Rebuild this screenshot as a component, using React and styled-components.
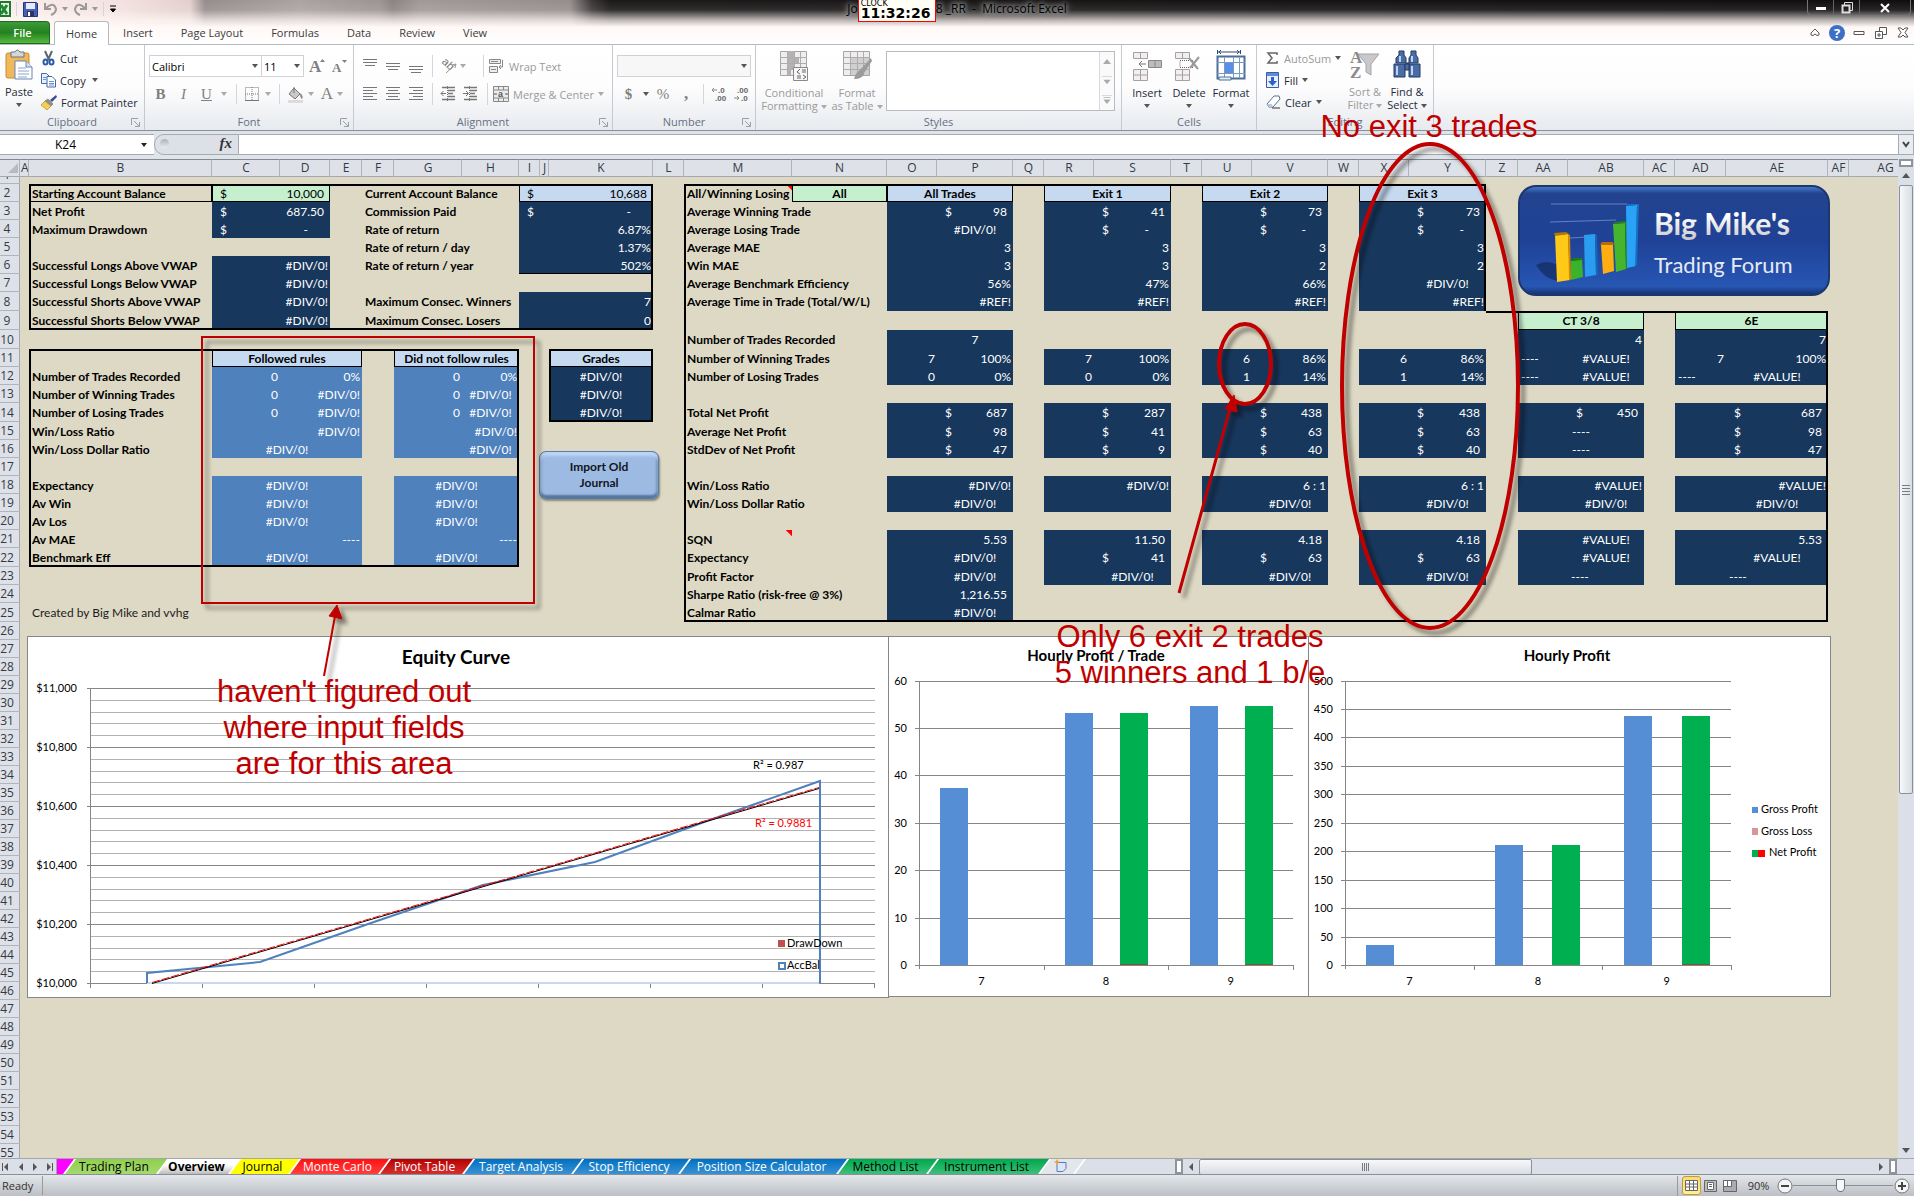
import React from 'react'
import styled, { createGlobalStyle, css } from 'styled-components'

const GlobalStyle = createGlobalStyle`
  * {
    box-sizing: border-box;
  }

  body {
    margin: 0;
    background: #fff;
    font-family: 'Open Sans', 'Noto Sans', sans-serif;
    font-size: 11px;
    color: #1e2a3a;
  }

  button, input, select {
    font: inherit;
    color: inherit;
    border: 0;
    padding: 0;
    margin: 0;
    background: none;
  }

  svg {
    overflow: visible;
  }
`

const sheetFont = "Lato, 'Open Sans', sans-serif"

/* ---------- window frame ---------- */

const Window = styled.div`
  position: relative;
  display: flex;
  flex-direction: column;
  height: 100vh;
  padding-bottom: 1px;
  overflow: hidden;
`

const Chrome = styled.header`
  height: 44px;
  flex: none;
  background:
    linear-gradient(to bottom, rgba(255, 248, 246, 0) 0, rgba(255, 248, 246, 0.1) 10px, rgba(255, 248, 246, 0.7) 20px, #fff8f6 27px, #fff 44px),
    linear-gradient(to right, #fbeeec 0, #f3e2df 120px, #e3d0cd 190px, #958c8b 205px, #aba3a2 300px, #9c9493 380px, #8b8382 393px, #a19998 420px, #958d8c 570px, #3a3637 592px, #1a1818 610px, #0f0d0e 100%);
`

const TitleBar = styled.div`
  height: 21px;
  display: grid;
  grid-template-columns: 1fr auto 1fr;
`

const QuickAccess = styled.div`
  display: flex;
  align-items: center;
  gap: 5px;
  height: 18px;
`

const Title = styled.h1`
  display: flex;
  align-items: flex-start;
  margin: 0;
  font-size: 12px;
  font-weight: 400;
  line-height: 18px;
  color: #000;
  text-shadow: 0 0 4px #aaa, 0 0 6px #aaa, 0 0 10px #999;
  white-space: pre;
`

const Clock = styled.time`
  position: relative;
  width: 78px;
  height: 22px;
  padding: 0 2px;
  border: 1px solid #f00;
  border-top: 0;
  background: #fffff6;
  text-shadow: none;
  font-family: 'DejaVu Sans', sans-serif;
  font-weight: 700;
  font-size: 14px;
  line-height: 13px;
`

const ClockLabel = styled.span`
  display: block;
  font-size: 8px;
  line-height: 7px;
  font-weight: 400;
`

const WindowButtons = styled.div`
  justify-self: end;
  display: flex;
  width: 104px;
  height: 16px;
  margin-right: 3px;
  border: 1px solid #777;
  border-top: 0;
  border-radius: 0 0 5px 5px;
`

const WindowButton = styled.button`
  flex: ${p => p.$grow || 1};
  display: flex;
  align-items: center;
  justify-content: center;
  border-left: ${p => (p.$first ? '0' : '1px solid #666')};
`

const TabStrip = styled.nav`
  display: flex;
  align-items: flex-end;
  height: 23px;
`

const FileTab = styled.button`
  width: 50px;
  height: 23px;
  margin-right: 4px;
  padding-right: 4px;
  border-radius: 0 4px 0 0;
  border: 1px solid #1d6b21;
  border-left: 0;
  background: linear-gradient(#3f9a3a, #23821f 50%, #58b83f);
  color: #fff;
  font-weight: 600;
`

const RibbonTab = styled.button`
  height: 23px;
  padding: 0 14px;
  color: #3b3b3b;
  ${p => p.$active && css`
    height: 24px;
    margin-bottom: -1px;
    padding: 0 11px;
    background: #fff;
    border: 1px solid #b6babf;
    border-bottom: 0;
    border-radius: 3px 3px 0 0;
    z-index: 1;
  `}
`

const MdiButtons = styled.div`
  margin-left: auto;
  display: flex;
  align-items: center;
  height: 23px;
  gap: 6px;
  padding-right: 3px;
`

const IconButton = styled.button`
  display: flex;
  align-items: center;
  justify-content: center;
  width: ${p => p.$w || 16}px;
  height: ${p => p.$h || 20}px;
  flex: none;
`

/* ---------- ribbon ---------- */

const Ribbon = styled.section`
  display: flex;
  height: 87px;
  flex: none;
  border-top: 1px solid #b6babf;
  border-bottom: 1px solid #8b9097;
  background: linear-gradient(#fff, #fdfdfe 50%, #e7eaee);
`

const Group = styled.div`
  display: flex;
  flex-direction: column;
  width: ${p => p.$w}px;
  flex: none;
  border-right: 1px solid #c6cad0;
`

const GroupBody = styled.div`
  display: flex;
  height: 69px;
  padding: ${p => p.$pad || '4px 4px 0'};
`

const GroupName = styled.div`
  position: relative;
  text-align: center;
  line-height: 16px;
  color: #666f85;
`

const Launcher = styled.button`
  position: absolute;
  right: 4px;
  top: 4px;
  width: 9px;
  height: 9px;
  line-height: 0;
`

const Stack = styled.div`
  display: flex;
  flex-direction: column;
  flex: none;
  width: ${p => (p.$w ? `${p.$w}px` : 'auto')};
`

const CommandList = styled(Stack)`
  margin-top: -2px;
  padding-left: 3px;
`

const ToolRow = styled.div`
  display: flex;
  align-items: center;
  height: ${p => p.$h || 22}px;
  margin-top: ${p => p.$top || 0}px;
`

const SmallTool = styled.button`
  display: flex;
  align-items: center;
  gap: 4px;
  height: 22px;
  white-space: nowrap;
  color: ${p => (p.$off ? '#9a9a9a' : '#1e2a3a')};
`

const BigTool = styled.button`
  display: flex;
  flex-direction: column;
  align-items: center;
  width: ${p => p.$w}px;
  height: 64px;
  flex: none;
  line-height: 13px;
  color: ${p => (p.$off ? '#9a9a9a' : '#1e2a3a')};
  white-space: nowrap;

  > svg {
    margin-bottom: 5px;
    flex: none;
  }
`

const Caret = styled.i`
  display: inline-block;
  width: 0;
  height: 0;
  margin: ${p => p.$m || '0 3px'};
  border: 3px solid transparent;
  border-top: 4px solid ${p => p.$c || '#555'};
  border-bottom: 0;
  flex: none;
  vertical-align: middle;
`

const Combo = styled.span`
  display: flex;
  align-items: center;
  width: ${p => p.$w}px;
  height: 22px;
  margin-left: ${p => (p.$joined ? -1 : 0)}px;
  border: 1px solid #cfd2d7;
  background: ${p => (p.$off ? '#f7f7f8' : '#fff')};
  color: #000;

  select {
    flex: 1;
    min-width: 0;
    height: 20px;
    padding-left: 2px;
    appearance: none;
  }
`

const Glyph = styled.button`
  width: ${p => p.$w || 23}px;
  height: 22px;
  flex: none;
  color: #808080;
  font-family: 'Liberation Serif', serif;
  font-size: ${p => p.$size || 15}px;
  font-weight: ${p => p.$weight || 400};
  font-style: ${p => p.$style || 'normal'};
  text-decoration: ${p => p.$deco || 'none'};
  line-height: 22px;
  display: flex;
  align-items: center;
  justify-content: center;
`

const Rule = styled.i`
  width: 1px;
  height: ${p => p.$h || 20}px;
  margin: ${p => (p.$tight ? '0' : '0 5px')};
  background: #d3d6db;
  flex: none;
`

const Gallery = styled.div`
  display: flex;
  height: 60px;
  flex: 1;
  margin-top: 1px;
  margin-right: 6px;
  border: 1px solid #b7bcc3;
  background: #fff;
`

const GalleryScroll = styled.div`
  display: grid;
  grid-template-rows: 1fr 1fr 1fr;
  width: 15px;
  margin-left: auto;
  border-left: 1px solid #d6d9de;
  place-items: center;
  background: #fafafb;

  svg + svg {
    border-top: 1px solid #d6d9de;
  }
`

/* ---------- formula bar ---------- */

const FormulaBar = styled.section`
  display: flex;
  flex: none;
  height: 28px;
  padding: 3px 0 4px;
  background: #dfe3ea;
`

const NameBox = styled.label`
  display: flex;
  align-items: center;
  width: 154px;
  background: #fff;
  border: 1px solid #a6abb3;
  border-left: 0;
  border-right: 0;
  color: #000;

  input {
    width: 131px;
    text-align: center;
    font-size: 12px;
  }
`

const FxArea = styled.div`
  display: flex;
  align-items: center;
  justify-content: space-between;
  width: 85px;
  padding: 0 6px 2px 5px;
  border: 1px solid #a6abb3;
  border-radius: 10px 0 0 10px;
  background: #dde1e7;
`

const Knob = styled.i`
  width: 9px;
  height: 9px;
  border-radius: 5px;
  background: linear-gradient(#aeb2b8, #e8eaed);
`

const FxButton = styled.button`
  font-family: 'Liberation Serif', serif;
  font-style: italic;
  font-weight: 700;
  font-size: 15px;
  line-height: 15px;
  color: #333;
`

const FormulaInput = styled.input`
  flex: 1;
  min-width: 0;
  background: #fff;
  border-top: 1px solid #a6abb3;
  border-bottom: 1px solid #a6abb3;
`

const Expand = styled.button`
  width: 16px;
  border: 1px solid #a6abb3;
  background: #e9ecf0;
  display: flex;
  align-items: center;
  justify-content: center;
`

/* ---------- sheet ---------- */

const Workspace = styled.main`
  display: flex;
  flex: 1;
  min-height: 0;
`

const SheetArea = styled.div`
  position: relative;
  flex: 1;
  min-width: 0;
  overflow: hidden;
  background: #ddd9c4;
`

const Grid = styled.table`
  width: calc(100% + 24px);
  table-layout: fixed;
  border-collapse: separate;
  border-spacing: 0;
  font-family: ${sheetFont};
  font-size: 12px;
  line-height: 16px;
`

const ColHead = styled.th`
  height: 18px;
  padding: 0 0 0 1px;
  border-top: 1px solid #83888f;
  border-right: 1px solid #b0b5bd;
  border-bottom: 1px solid #a3a8b0;
  background: #dee2e8;
  font: 400 12px/16px 'Open Sans', sans-serif;
  color: #333a45;
  overflow: hidden;
`

const RowHead = styled.th`
  height: ${p => p.$h}px;
  padding: 0 5px 0 0;
  border-right: 1px solid #a3a8b0;
  border-bottom: 1px solid #b0b5bd;
  background: #dee2e8;
  font: 400 12px/16px 'Open Sans', sans-serif;
  color: #333a45;
  overflow: hidden;

  span {
    display: flex;
    align-items: flex-end;
    justify-content: center;
    height: ${p => p.$h - 1}px;
    overflow: hidden;
  }
`

const kinds = {
  label: css`font-weight: 700; color: #000; padding-left: 3px;`,
  note: css`color: #1c1c1c; padding-left: 3px;`,
  boxed: css`font-weight: 700; color: #000; padding-left: 3px;`,
  head: css`font-weight: 700; color: #000; background: #c5d9f1;`,
  green: css`font-weight: 700; color: #000; background: #c6efce;`,
  cash: css`color: #000; background: #c6efce;`,
  pale: css`color: #000; background: #c5d9f1;`,
  navy: css`color: #fff; background: #17375d;`,
  blue: css`color: #fff; background: #4f81bd;`,
}

const aligns = {
  left: css`text-align: left; padding-left: 3px;`,
  right: css`text-align: right; padding-right: 2px;`,
  inset: css`text-align: right; padding-right: 6px;`,
  center: css`text-align: center;`,
}

const Cell = styled.td`
  padding: 1px 0 0;
  white-space: nowrap;
  ${p => kinds[p.$kind]}
  ${p => aligns[p.$align]}
  ${p => p.$flag && css`
    background: linear-gradient(225deg, #f00 4px, transparent 5px) no-repeat;
  `}
  box-shadow: ${p => p.$edges || 'none'};
`

const Money = styled.span`
  display: flex;
  justify-content: space-between;
  padding: 0 ${p => (p.$dash ? 22 : 6)}px 0 8px;
`

const Floating = styled.div`
  position: absolute;
  left: ${p => p.$x}px;
  top: ${p => p.$y}px;
  line-height: 0;
`

const ImportButton = styled.button`
  width: 120px;
  height: 48px;
  padding: 0 20px;
  border-radius: 7px;
  background: #9dbae3;
  border: 1px solid #5b7ba8;
  box-shadow: inset 0 4px 3px #bdd5f5, inset 0 -3px 2px #5377a5, inset -2px 0 2px #6d8db8, 1px 2px 2px #8a8878;
  font: 700 12px/16px ${sheetFont};
  color: #10151c;
`

const VScroll = styled.div`
  display: flex;
  flex-direction: column;
  align-items: center;
  width: 16px;
  flex: none;
  background: #dbdfe7;
`

const Splitter = styled.i`
  width: ${p => p.$w}px;
  height: ${p => p.$h}px;
  border: 2px solid #8f949c;
  background: #fff;
  flex: none;
`

const Thumb = styled.div`
  display: flex;
  flex-direction: ${p => (p.$vertical ? 'column' : 'row')};
  align-items: center;
  justify-content: center;
  gap: ${p => (p.$vertical ? 2 : 1)}px;
  width: ${p => (p.$vertical ? '14px' : '45%')};
  height: ${p => (p.$vertical ? '61%' : '16px')};
  border: 1px solid #8a9099;
  border-radius: 2px;
  background: linear-gradient(${p => (p.$vertical ? 'to right' : 'to bottom')}, #f6f8fa, #dadde2);

  i {
    width: ${p => (p.$vertical ? 8 : 1)}px;
    height: ${p => (p.$vertical ? 1 : 8)}px;
    background: #777c84;
  }
`

const Arrow = styled.button`
  width: 16px;
  height: ${p => p.$h || 16}px;
  flex: none;
  display: flex;
  align-items: center;
  justify-content: center;
`

/* ---------- bottom bars ---------- */

const SheetBar = styled.section`
  display: flex;
  flex: none;
  height: 17px;
  background: #dbdfe7;
  border-top: 1px solid #a3a8b0;
  border-bottom: 1px solid #8b9097;
`

const SheetNav = styled.div`
  display: flex;
  width: 57px;
  border-right: 1px solid #a3a8b0;

  button {
    flex: 1;
    line-height: 0;
  }
`

const slant = css`
  clip-path: polygon(${p => (p.$first ? 0 : 11)}px 0, 100% 0, calc(100% - 11px) 100%, 0 100%);
`

const TabEdge = styled.span`
  display: flex;
  width: ${p => p.$w + 11}px;
  margin-right: -11px;
  padding-right: 2px;
  background: #fff;
  flex: none;
  ${slant}
`

const SheetTab = styled.button`
  flex: 1;
  background: ${p => p.$bg};
  color: ${p => p.$fg};
  font-size: 12px;
  font-weight: ${p => (p.$active ? 700 : 400)};
  line-height: 14px;
  white-space: nowrap;
  padding-right: 4px;
  ${slant}
`

const HScroll = styled.div`
  display: flex;
  flex: 1;
  min-width: 0;
  align-items: center;
  margin-left: 100px;
`

const StatusBar = styled.footer`
  display: flex;
  align-items: center;
  flex: none;
  height: 21px;
  background: linear-gradient(#e3e6ea, #bcc0c5);
  color: #333;
`

const Ready = styled.span`
  width: 43px;
  padding-left: 2px;
  border-right: 1px solid #999;
  line-height: 19px;
`

const ViewTools = styled.div`
  display: flex;
  align-items: center;
  margin-left: auto;
  padding-right: 4px;
  border-left: 1px solid #999;
  padding-left: 4px;
`

const ViewButton = styled.button`
  width: 19px;
  height: 19px;
  line-height: 0;
  display: flex;
  align-items: center;
  justify-content: center;
  ${p => p.$on && css`
    border: 1px solid #c29a3c;
    border-radius: 3px;
    background: linear-gradient(#fbd978, #fff08f);
  `}
`

const ZoomLevel = styled.output`
  width: 35px;
  margin-left: 2px;
  text-align: center;
`

const ZoomSlider = styled.input`
  width: 100px;
  height: 17px;
  appearance: none;
  background: linear-gradient(#8b9097, #8b9097) center / 100% 1px no-repeat;

  &::-webkit-slider-thumb {
    appearance: none;
    width: 9px;
    height: 13px;
    border: 1px solid #6d737b;
    border-radius: 1px 1px 5px 5px;
    background: #f8f9fa;
  }
`

/* ---------- annotations ---------- */

const Overlay = styled.div`
  position: absolute;
  inset: 0;
  pointer-events: none;

  > svg {
    position: absolute;
    inset: 0;
  }
`

const Remark = styled.p`
  position: absolute;
  left: ${p => p.$x}px;
  top: ${p => p.$y}px;
  width: 300px;
  margin: 0;
  font: 31px/36px 'Liberation Sans', Arial, sans-serif;
  color: #c00000;
  text-align: center;
  white-space: pre-line;
`

/* ---------- sheet data ---------- */

const columns = [
  ['A', 9], ['B', 183], ['C', 68], ['D', 50], ['E', 32], ['F', 32], ['G', 68], ['H', 57], ['I', 21],
  ['J', 9], ['K', 104], ['L', 31], ['M', 108], ['N', 95], ['O', 50], ['P', 76], ['Q', 31], ['R', 50],
  ['S', 77], ['T', 31], ['U', 50], ['V', 76], ['W', 31], ['X', 50], ['Y', 77], ['Z', 32], ['AA', 50],
  ['AB', 76], ['AC', 31], ['AD', 51], ['AE', 102], ['AF', 21], ['AG', null],
]

const names = columns.map(c => c[0])
const at = name => names.indexOf(name)

const tallRows = [8, 9, 10, 14, 22, 25]
const rowHeight = n => (n === 1 ? 7 : tallRows.includes(n) ? 19 : 18)

// range -> [text, kind, align]
const cells = {}
const put = (row, range, text, kind, align) => {
  const [from, to = from] = range.split(':')
  cells[`${row}-${at(from)}`] = { span: at(to) - at(from) + 1, text, kind, align }
}

const labels = (range, rows) =>
  Object.entries(rows).forEach(([row, text]) => put(row, range, text, 'label', ''))

labels('B', {
  3: 'Net Profit',
  4: 'Maximum Drawdown',
  6: 'Successful Longs Above VWAP',
  7: 'Successful Longs Below VWAP',
  8: 'Successful Shorts Above VWAP',
  9: 'Successful Shorts Below VWAP',
  12: 'Number of Trades Recorded',
  13: 'Number of Winning Trades',
  14: 'Number of Losing Trades',
  15: 'Win/Loss Ratio',
  16: 'Win/Loss Dollar Ratio',
  18: 'Expectancy',
  19: 'Av Win',
  20: 'Av Los',
  21: 'Av MAE',
  22: 'Benchmark Eff',
})
put(2, 'B', 'Starting Account Balance', 'boxed', '')
put(25, 'B', 'Created by Big Mike and vvhg', 'note', '')

labels('F:H', {
  2: 'Current Account Balance',
  3: 'Commission Paid',
  4: 'Rate of return',
  5: 'Rate of return / day',
  6: 'Rate of return / year',
  8: 'Maximum Consec. Winners',
  9: 'Maximum Consec. Losers',
})

labels('M:N', {
  3: 'Average Winning Trade',
  4: 'Average Losing Trade',
  5: 'Average MAE',
  6: 'Win MAE',
  7: 'Average Benchmark Efficiency',
  8: 'Average Time in Trade (Total/W/L)',
  10: 'Number of Trades Recorded',
  11: 'Number of Winning Trades',
  12: 'Number of Losing Trades',
  14: 'Total Net Profit',
  15: 'Average Net Profit',
  16: 'StdDev of Net Profit',
  18: 'Win/Loss Ratio',
  19: 'Win/Loss Dollar Ratio',
  22: 'Expectancy',
  23: 'Profit Factor',
  24: 'Sharpe Ratio (risk-free @ 3%)',
  25: 'Calmar Ratio',
})
put(2, 'M', 'All/Winning Losing', 'label', '')
put(21, 'M', 'SQN', 'label', '')
const flagged = [2, 21].map(row => `${row}-${at('M')}`)

put(2, 'C:D', '10,000', 'cash', 'money')
put(3, 'C:D', '687.50', 'navy', 'money')
put(4, 'C:D', '-', 'navy', 'money')
;[6, 7, 8, 9].forEach(r => put(r, 'C:D', '#DIV/0!', 'navy', 'right'))

put(2, 'I:K', '10,688', 'pale', 'money')
put(3, 'I:K', '-', 'navy', 'money')
put(4, 'I:K', '6.87%', 'navy', 'right')
put(5, 'I:K', '1.37%', 'navy', 'right')
put(6, 'I:K', '502%', 'navy', 'right')
put(8, 'I:K', '7', 'navy', 'right')
put(9, 'I:K', '0', 'navy', 'right')

put(11, 'C:E', 'Followed rules', 'head', 'center')
put(11, 'G:H', 'Did not follow rules', 'head', 'center')
;[12, 13, 14].forEach(r => {
  const share = r === 12 ? '0%' : '#DIV/0!'
  put(r, 'C', '0', 'blue', 'right')
  put(r, 'D:E', share, 'blue', 'right')
  put(r, 'G', '0', 'blue', 'right')
  put(r, 'H', share, 'blue', r === 12 ? 'right' : 'center')
})
put(15, 'C:E', '#DIV/0!', 'blue', 'right')
put(15, 'G:H', '#DIV/0!', 'blue', 'right')
put(16, 'C:E', '#DIV/0!', 'blue', 'center')
put(16, 'G', '', 'blue', '')
put(16, 'H', '#DIV/0!', 'blue', 'center')
;[18, 19, 20, 21, 22].forEach(r => {
  const text = r === 21 ? '----' : '#DIV/0!'
  const align = r === 21 ? 'right' : 'center'
  put(r, 'C:E', text, 'blue', align)
  put(r, 'G:H', text, 'blue', align)
})

put(11, 'K', 'Grades', 'head', 'center')
;[12, 13, 14].forEach(r => put(r, 'K', '#DIV/0!', 'navy', 'center'))

put(2, 'N', 'All', 'green', 'center')

// Each block is a pair of columns; a row holds [first, second, align of second]
const block = (a, b, title, kind, titleRow, rows) => {
  put(titleRow, `${a}:${b}`, title, kind, 'center')
  Object.entries(rows).forEach(([row, [first, second, align]]) => {
    if (align === 'merged') {
      put(row, `${a}:${b}`, second, 'navy', 'center')
      return
    }
    put(row, a, first, 'navy', first === '----' ? 'left' : 'right')
    put(row, b, second, 'navy', align)
  })
}

block('O', 'P', 'All Trades', 'head', 2, {
  3: ['', '98', 'money'], 4: ['', '#DIV/0!', 'center'], 5: ['', '3', 'right'], 6: ['', '3', 'right'],
  7: ['', '56%', 'right'], 8: ['', '#REF!', 'right'],
  10: ['', '7', 'center'], 11: ['7', '100%', 'right'], 12: ['0', '0%', 'right'],
  14: ['', '687', 'money'], 15: ['', '98', 'money'], 16: ['', '47', 'money'],
  18: ['', '#DIV/0!', 'right'], 19: ['', '#DIV/0!', 'center'],
  21: ['', '5.53', 'inset'], 22: ['', '#DIV/0!', 'center'], 23: ['', '#DIV/0!', 'center'],
  24: ['', '1,216.55', 'inset'], 25: ['', '#DIV/0!', 'center'],
})

block('R', 'S', 'Exit 1', 'head', 2, {
  3: ['', '41', 'money'], 4: ['', '-', 'money'], 5: ['', '3', 'right'], 6: ['', '3', 'right'],
  7: ['', '47%', 'right'], 8: ['', '#REF!', 'right'],
  11: ['7', '100%', 'right'], 12: ['0', '0%', 'right'],
  14: ['', '287', 'money'], 15: ['', '41', 'money'], 16: ['', '9', 'money'],
  18: ['', '#DIV/0!', 'right'], 19: ['', '', 'right'],
  21: ['', '11.50', 'inset'], 22: ['', '41', 'money'], 23: ['', '#DIV/0!', 'center'],
})

const exitRows = efficiency => ({
  3: ['', '73', 'money'], 4: ['', '-', 'money'], 5: ['', '3', 'right'], 6: ['', '2', 'right'],
  7: ['', efficiency, efficiency === '66%' ? 'right' : 'center'], 8: ['', '#REF!', 'right'],
  11: ['6', '86%', 'right'], 12: ['1', '14%', 'right'],
  14: ['', '438', 'money'], 15: ['', '63', 'money'], 16: ['', '40', 'money'],
  18: ['', '6 : 1', 'right'], 19: ['', '#DIV/0!', 'center'],
  21: ['', '4.18', 'inset'], 22: ['', '63', 'money'], 23: ['', '#DIV/0!', 'center'],
})
block('U', 'V', 'Exit 2', 'head', 2, exitRows('66%'))
block('X', 'Y', 'Exit 3', 'head', 2, exitRows('#DIV/0!'))

block('AA', 'AB', 'CT 3/8', 'green', 9, {
  10: ['', '4', 'right'], 11: ['----', '#VALUE!', 'center'], 12: ['----', '#VALUE!', 'center'],
  14: ['', '450', 'money'], 15: ['', '----', 'merged'], 16: ['', '----', 'merged'],
  18: ['', '#VALUE!', 'right'], 19: ['', '#DIV/0!', 'center'],
  21: ['', '#VALUE!', 'center'], 22: ['', '#VALUE!', 'center'], 23: ['', '----', 'left'],
})

block('AD', 'AE', '6E', 'green', 9, {
  10: ['', '7', 'right'], 11: ['7', '100%', 'right'], 12: ['----', '#VALUE!', 'center'],
  14: ['', '687', 'money'], 15: ['', '98', 'money'], 16: ['', '47', 'money'],
  18: ['', '#VALUE!', 'right'], 19: ['', '#DIV/0!', 'center'],
  21: ['', '5.53', 'inset'], 22: ['', '#VALUE!', 'center'], 23: ['', '----', 'left'],
})

const within = (row, col, r1, r2, from, to) =>
  row >= r1 && row <= r2 && col >= at(from) && col <= at(to)

const panelOf = (row, col) => {
  if (within(row, col, 2, 9, 'B', 'K')) return 1
  if (within(row, col, 11, 22, 'B', 'H')) return 2
  if (within(row, col, 11, 14, 'K', 'K')) return 3
  if (within(row, col, 2, 25, 'M', 'Y') || within(row, col, 9, 25, 'Z', 'AE')) return 4
  return 0
}

const edgesOf = (row, col, span, kind) => {
  const list = []
  const panel = panelOf(row, col)
  const last = col + span - 1
  if (panel) {
    if (panelOf(row - 1, col) !== panel) list.push('inset 0 2px #000')
    if (panelOf(row + 1, col) !== panel) list.push('inset 0 -2px #000')
    if (panelOf(row, col - 1) !== panel) list.push('inset 2px 0 #000')
    if (panelOf(row, last + 1) !== panel) list.push('inset -2px 0 #000')
  }
  if (['head', 'green', 'cash', 'pale', 'boxed'].includes(kind)) list.push('inset 0 0 0 1px #000')
  if (row === 6 && col === at('I')) list.push('inset 0 -1px #000')
  return list.join(', ')
}

const DataRow = ({ row }) => {
  const out = []
  for (let col = 0; col < columns.length; col += 1) {
    const key = `${row}-${col}`
    const cell = cells[key] || { span: 1, text: '' }
    const { span, text, kind, align } = cell
    out.push(
      <Cell
        key={key}
        colSpan={span}
        $kind={kind}
        $align={align}
        $flag={flagged.includes(key)}
        $edges={edgesOf(row, col, span, kind)}
      >
        {align === 'money' ? <Money $dash={text === '-'}><span>$</span><span>{text}</span></Money> : text}
      </Cell>
    )
    col += span - 1
  }
  return out
}

const Sheet = () => (
  <Grid>
    <colgroup>
      <col style={{ width: 20 }} />
      {columns.map(([name, width]) => <col key={name} style={width ? { width } : undefined} />)}
    </colgroup>
    <thead>
      <tr>
        <ColHead aria-label="Select all">
          <svg width="12" height="12" style={{ display: 'block', marginLeft: 6 }}><path d="M11 1V11H1Z" fill="#b6bac1" /></svg>
        </ColHead>
        {names.map(name => <ColHead key={name} scope="col">{name}</ColHead>)}
      </tr>
    </thead>
    <tbody>
      {Array.from({ length: 55 }, (_, i) => i + 1).map(row => (
        <tr key={row}>
          <RowHead scope="row" $h={rowHeight(row)}><span>{row}</span></RowHead>
          {row < 26 ? <DataRow row={row} /> : <Cell colSpan={columns.length} />}
        </tr>
      ))}
    </tbody>
  </Grid>
)

/* ---------- charts ---------- */

const ChartText = styled.text`
  font: ${p => p.$weight || 400} ${p => p.$size || 11}px ${sheetFont};
  fill: ${p => p.$fill || '#000'};
  text-anchor: ${p => p.$anchor || 'start'};
`

const EquityChart = () => (
  <svg width="862" height="362" viewBox="27 636 862 362" role="img" aria-label="Equity Curve">
    <rect x="27.5" y="636.5" width="861" height="361" fill="#fff" stroke="#868686" />
    {Array.from({ length: 26 }, (_, i) => (
      <path
        key={i}
        d={`M${i % 5 ? 91 : 87} ${Math.round(688 + i * 11.8) + 0.5}H875`}
        stroke={i % 5 ? '#b3b3b3' : '#868686'}
      />
    ))}
    <path d="M90.5 688V987" stroke="#868686" />
    {Array.from({ length: 8 }, (_, i) => <path key={i} d={`M${90.5 + i * 112} 983v5`} stroke="#868686" />)}
    {['$11,000', '$10,800', '$10,600', '$10,400', '$10,200', '$10,000'].map((text, i) => (
      <ChartText key={text} x="77" y={692 + i * 59} $anchor="end">{text}</ChartText>
    ))}
    <path d="M147 983H819" stroke="#c6d9f1" strokeWidth="2" />
    <path d="M147 983V973L260 962L371 923L483 885L595 862L707 821L820 781V983" fill="none" stroke="#4f81bd" strokeWidth="2" />
    <path d="M152 983.5L819 788.5" stroke="#000" />
    <path d="M152 982.5L819 787.5" stroke="#f00" strokeDasharray="8 2" />
    <ChartText x="456" y="664" $anchor="middle" $weight="700" $size={19}>Equity Curve</ChartText>
    <ChartText x="753" y="769">R² = 0.987</ChartText>
    <ChartText x="755" y="827" $fill="#f00">R² = 0.9881</ChartText>
    <path d="M778 940h7v7h-7z" fill="#c0504d" />
    <ChartText x="787" y="947">DrawDown</ChartText>
    <path d="M779 963h6v6h-6z" fill="#fff" stroke="#4f81bd" strokeWidth="2" />
    <ChartText x="787" y="969">AccBal</ChartText>
  </svg>
)

const BarChart = ({ x, width, title, titleX, left, right, max, step, bars, children }) => {
  const count = max / step
  const gap = 284.5 / count
  const third = (right - left) / 3
  return (
    <svg width={width} height="361" viewBox={`${x} 636 ${width} 361`} role="img" aria-label={title}>
      <rect x={x + 0.5} y="636.5" width={width - 1} height="360" fill="#fff" stroke="#868686" />
      {Array.from({ length: count + 1 }, (_, i) => (
        <React.Fragment key={i}>
          <path d={`M${left - 4} ${Math.round(965 - i * gap) + 0.5}H${right}`} stroke="#868686" />
          <ChartText x={left - 12} y={Math.round(969 - i * gap)} $anchor="end">{i * step}</ChartText>
        </React.Fragment>
      ))}
      <path d={`M${left + 0.5} 681V969`} stroke="#868686" />
      {[1, 2, 3].map(i => <path key={i} d={`M${Math.round(left + third * i) + 0.5} 965v5`} stroke="#868686" />)}
      {bars.map(([bx, top, fill, base]) => (
        <React.Fragment key={bx}>
          <path d={`M${bx} ${top}h28V965h-28z`} fill={fill} />
          {base && <path d={`M${bx} 964h28v1h-28z`} fill="#7a5a2a" />}
        </React.Fragment>
      ))}
      {[7, 8, 9].map((n, i) => (
        <ChartText key={n} x={left + third * (i + 0.5)} y="985" $anchor="middle">{n}</ChartText>
      ))}
      <ChartText x={titleX} y="661" $anchor="middle" $weight="700" $size={15}>{title}</ChartText>
      {children}
    </svg>
  )
}

const sky = '#558ed5'
const leaf = '#00b050'

const ratioBars = [
  [940, 788, sky], [1065, 713, sky], [1120, 713, leaf, true], [1190, 706, sky], [1245, 706, leaf, true],
]
const profitBars = [
  [1366, 945, sky], [1495, 845, sky], [1552, 845, leaf], [1624, 716, sky], [1682, 716, leaf, true],
]

const ForumLogo = () => (
  <svg width="312" height="112" viewBox="0 0 312 112" role="img" aria-label="Big Mike's Trading Forum">
    <defs>
      <linearGradient id="plate" x1="0" y1="0" x2="0" y2="1">
        <stop offset="0" stopColor="#4a7fd0" />
        <stop offset="0.07" stopColor="#23438f" />
        <stop offset="0.5" stopColor="#1f4296" />
        <stop offset="0.92" stopColor="#2756b4" />
        <stop offset="1" stopColor="#16306a" />
      </linearGradient>
      <linearGradient id="steel" x1="0" y1="0" x2="0" y2="1">
        <stop offset="0.3" stopColor="#fff" />
        <stop offset="1" stopColor="#c9c5c9" />
      </linearGradient>
    </defs>
    <rect x="1" y="1" width="310" height="109" rx="17" fill="url(#plate)" stroke="#1b376f" strokeWidth="2" />
    <path d="M33 19h76M32 37l66-2M38 54l30-2" stroke="#7e9bd6" strokeWidth="1" opacity="0.7" />
    <path d="M18 80q10-6 22 0v16q-14-2-22-16z" fill="#132a60" opacity="0.7" />
    <path d="M37 50l13-1 2 46-13 2z" fill="#ffc91a" />
    <path d="M36 48l12-1 3 2-14 2z" fill="#b07900" />
    <path d="M50 49l2 1 1 44-2 1z" fill="#d88a00" />
    <path d="M53 76l11-2 1 18-12 3z" fill="#3bb22b" />
    <path d="M53 76l2-3h10l-1 2z" fill="#1d7a16" />
    <path d="M66 50l11-1 1 41-11 2z" fill="#2a9df0" />
    <path d="M77 49l2 1 1 39-2 1z" fill="#1468b8" />
    <path d="M83 60l12-1 1 27-11 3z" fill="#ffae12" />
    <path d="M82 60l2-3h11l1 3z" fill="#b86c00" />
    <path d="M95 39l12-1 1 46-10 3z" fill="#46b52e" />
    <path d="M95 39l2-2 10-1 2 2 1 45-2 1-1-46z" fill="#23831a" />
    <path d="M108 21l11-1-1 61-9 2z" fill="#2aa2f7" />
    <path d="M108 21l2-2h11v2l-2 59-2 1 2-61z" fill="#1670c4" />
    <text x="136" y="50" fontFamily="Lato, Open Sans" fontWeight="700" fontSize="30" fill="url(#steel)">Big Mike's</text>
    <text x="136" y="88" fontFamily="Lato, Open Sans" fontSize="22" fill="#e6eaf4">Trading Forum</text>
  </svg>
)

/* ---------- icons ---------- */

const Lines = ({ rows, x = 1 }) => (
  <svg width="16" height="16" viewBox="0 0 16 16" stroke="#777" strokeWidth="1">
    {rows.map(([y, a = x, b = 15]) => <path key={y} d={`M${a} ${y + 0.5}H${b}`} />)}
  </svg>
)

const PasteIcon = () => (
  <svg width="28" height="31" viewBox="0 0 28 31">
    <rect x="1" y="4" width="23" height="25" rx="2" fill="#efb85a" stroke="#c98b2b" />
    <path d="M6 3h4q2-4 5 0h4v5H6z" fill="#d4d7da" stroke="#6f757c" />
    <path d="M10 12h11l6 6v12H10z" fill="#fff" stroke="#6686b5" />
    <path d="M21 12v6h6" fill="#d5e3f5" stroke="#6686b5" />
    <path d="M13 19h8M13 22h11M13 25h11M13 28h9" stroke="#8aa5cc" />
  </svg>
)

const CutIcon = () => (
  <svg width="15" height="16" viewBox="0 0 15 16" fill="none">
    <path d="M4 1l4 9M11 1L7 10" stroke="#5a6675" strokeWidth="2" />
    <ellipse cx="4.500" cy="12" rx="2" ry="2.600" stroke="#2c5aa8" strokeWidth="2" />
    <ellipse cx="10.500" cy="12" rx="2" ry="2.600" stroke="#2c5aa8" strokeWidth="2" />
  </svg>
)

const CopyIcon = () => (
  <svg width="15" height="16" viewBox="0 0 15 16" stroke="#3f69ab">
    <path d="M.5 1.500h5l3 3v7h-8z" fill="#e9f1fb" />
    <path d="M6 4.500h5l3.500 3.500v7H6z" fill="#fff" />
    <path d="M2 5.500h4M2 7.500h3M8 9.500h5M8 11.500h5M8 13h5" stroke="#6e93cf" />
  </svg>
)

const PainterIcon = () => (
  <svg width="16" height="16" viewBox="0 0 16 16">
    <path d="M15 1l-6 5 2 2 5-5z" fill="#3b4b8f" />
    <path d="M7 5l5 5-2 2-6-5z" fill="#8e8f9b" stroke="#555" strokeWidth=".5" />
    <path d="M4 7l6 5-4 4-6-5z" fill="#f3cf53" stroke="#b88a1c" strokeWidth=".7" />
  </svg>
)

const BordersIcon = () => (
  <svg width="14" height="14" viewBox="0 0 14 14" stroke="#777" strokeDasharray="1 1" fill="none">
    <path d="M.5.500h13v13H.5zM7 0v14M0 7h14" />
    <path d="M0 13.500h14" strokeDasharray="none" />
  </svg>
)

const BucketIcon = () => (
  <svg width="17" height="17" viewBox="0 0 17 17">
    <path d="M7 2l6 6-5 5-6-5z" fill="#c9c9cc" stroke="#777" />
    <path d="M7 7V1" stroke="#777" />
    <path d="M13 7q4 3 2 6-2-1-2-6z" fill="#888" />
    <path d="M1 14h15v3H1z" fill="#e2d9da" />
  </svg>
)

const GrowIcon = ({ down }) => (
  <svg width="16" height="16" viewBox="0 0 16 16" fill="#808080">
    <text x="0" y="14" fontFamily="Liberation Serif" fontWeight="700" fontSize={down ? 13 : 17}>A</text>
    <path d={down ? 'M10 2h5l-2.500 3z' : 'M11 4h5l-2.500-3z'} />
  </svg>
)

const OrientIcon = () => (
  <svg width="16" height="16" viewBox="0 0 16 16">
    <g transform="rotate(45 6 7)">
      <text x="0" y="9" fontFamily="Liberation Sans" fontSize="11" fill="#777">ab</text>
    </g>
    <path d="M5 15L15 6M15 6l-4 1M15 6l-1 4" stroke="#999" fill="none" />
  </svg>
)

const IndentIcon = ({ right }) => (
  <svg width="16" height="16" viewBox="0 0 16 16" fill="none" stroke="#777">
    <path d="M2 1.500h13M8 4.500h7M8 7.500h5M8 10.500h7M2 13.500h13" strokeWidth="1.500" />
    <path d={right ? 'M1 7.500h5M4 5l2.500 2.500L4 10' : 'M6 7.500H1M3.500 5L1 7.500 3.500 10'} />
    <path d="M7.500 0v16" strokeDasharray="1 1" />
  </svg>
)

const WrapIcon = () => (
  <svg width="16" height="16" viewBox="0 0 16 16" fill="#eee" stroke="#888">
    <path d="M.5 1.500h11v4H.5zM.5 8.500h8v6H.5z" />
    <path d="M13.500 2v7h-3M12 7l-2 2 2 2M2 3.500h7M2 11.500h5" fill="none" />
  </svg>
)

const MergeIcon = () => (
  <svg width="16" height="16" viewBox="0 0 16 16" fill="#ececec" stroke="#888">
    <path d="M.5.500h15v15H.5zM.5 4h15M.5 12h15M5.500.500V4M10.500.500V4M5.500 12v3.500M10.500 12v3.500" />
    <text x="5" y="11" fontFamily="Liberation Sans" fontSize="9" fontWeight="700" fill="#555" stroke="none">a</text>
    <path d="M1 8h3M12 8h3" stroke="#555" />
  </svg>
)

const DecimalIcon = ({ less }) => (
  <svg width="18" height="16" viewBox="0 0 18 16" fill="#666" fontFamily="Liberation Sans" fontSize="8" fontWeight="700">
    <text x={less ? 4 : 7} y="7">{less ? '.00' : '.0'}</text>
    <text x={less ? 8 : 4} y="15">{less ? '.0' : '.00'}</text>
    <path d={less ? 'M1 12h5M4 10l2 2-2 2' : 'M6 4H1M3 2L1 4l2 2'} stroke="#888" fill="none" />
  </svg>
)

const TableIcon = ({ brush }) => (
  <svg width="30" height="31" viewBox="0 0 30 31">
    <path d="M1.500 1.500h26v24h-26z" fill="#f1ecee" stroke="#a5a5a5" />
    {brush
      ? <path d="M8 7h19v18H8z" fill="#cfcfcf" />
      : <path d="M8 1h7v6h5v6h-5v6h-3v6H8z" fill="#b3b3b5" />}
    <path d="M1 7.500h27M1 13.500h27M1 19.500h27M8.500 1v24M15.500 1v24M21.500 1v24" stroke="#adadad" fill="none" />
    {brush
      ? <path d="M29 8L18 20q-4 2-6 9 9 0 10-6L30 11z" fill="#9b9b9d" />
      : (
        <>
          <path d="M14.500 17.500h14v13h-14z" fill="#f6f6f6" stroke="#888" />
          <path d="M21 19l-3 3 3 2M23 20h4M23 22h4M18 26h4M18 28h4M24 25l3 2-3 2" stroke="#666" fill="none" />
        </>
      )}
  </svg>
)

const InsertIcon = ({ remove }) => (
  <svg width="30" height="31" viewBox="0 0 30 31" fill="#f3eff1" stroke="#a5a0a3">
    <path d="M1.500 2.500h14v6h-14zM8.500 2.500v6M1.500 19.500h14v11h-14zM8.500 19.500v11M1.500 25h14" />
    {remove
      ? (
        <>
          <path d="M6 10.500h13v7H6z" fill="#fff" strokeDasharray="1 1" stroke="#666" />
          <path d="M15 8l9 11M25 7l-9 11" strokeWidth="2" stroke="#999" />
        </>
      )
      : (
        <>
          <path d="M16.500 10.500h13v7h-13zM23 10.500v7" fill="#bdbbbd" stroke="#888" />
          <path d="M14 14H7M10 11l-3 3 3 3" stroke="#777" fill="none" />
        </>
      )}
  </svg>
)

const FormatIcon = () => (
  <svg width="30" height="31" viewBox="0 0 30 31" fill="none">
    <path d="M1 2h24M1.500 0v4M24.500 0v4M5 0L3 2l2 2M21 0l2 2-2 2" stroke="#2c4a6e" />
    <path d="M1.500 6.500h27v22h-27z" fill="#fff" stroke="#4b6f9b" strokeWidth="2" />
    <path d="M8.500 7v21M17.500 7v21M23.500 7v21M1 12.500h28M1 23.500h28" stroke="#7b9ac0" />
    <path d="M9 13h8v10H9z" fill="#5b8ee8" />
    <path d="M3 27h12v3H3z" fill="#e7eef8" stroke="#4b6f9b" />
  </svg>
)

const FillIcon = () => (
  <svg width="14" height="16" viewBox="0 0 14 16">
    <path d="M.5.500h12v15H.5z" fill="#e8f0fb" stroke="#3a5f9f" />
    <path d="M1 1h11v3H1z" fill="#5e8de0" />
    <path d="M5 5h3v4h3l-4.500 5L2 9h3z" fill="#2d63c8" />
  </svg>
)

const EraserIcon = () => (
  <svg width="15" height="14" viewBox="0 0 15 14">
    <path d="M1 9L8 1h5l1 3-7 8H3z" fill="#fff" stroke="#5a6f93" />
    <path d="M1 9h5l1 3H3z" fill="#b9c9e4" />
    <path d="M6 13h8" stroke="#333" />
  </svg>
)

const SortIcon = () => (
  <svg width="30" height="31" viewBox="0 0 30 31" fill="#8b8b8b">
    <path d="M8 5h21l-8 10v11l-5-3v-8z" fill="#c9c9cb" stroke="#a5a5a7" />
    <text x="0" y="14" fontFamily="Liberation Serif" fontWeight="700" fontSize="17">A</text>
    <text x="0" y="29" fontFamily="Liberation Serif" fontWeight="700" fontSize="17">Z</text>
  </svg>
)

const BinocularsIcon = () => (
  <svg width="30" height="31" viewBox="0 0 30 31" fill="#4c6da4" stroke="#1f3a68">
    <path d="M7 2h5v4l2 3v6h3V9l2-3V2h5v4l2 3v5H4V9l3-3z" />
    <path d="M2 15h11v13H2zM17 15h11v13H17z" />
    <path d="M13 15h4v6h-4z" />
    <path d="M5 17v9M20 17v9M8 7v6M20 7v6" stroke="#c0d3f3" strokeWidth="2" />
  </svg>
)

const Tri = ({ d, c = '#555' }) => (
  <svg width="10" height="10" viewBox="0 0 10 10"><path d={d} fill={c} /></svg>
)

const up = 'M1 7h8L5 2z'
const downward = 'M1 3h8L5 8z'
const leftward = 'M7 1v8L3 5z'
const rightward = 'M3 1v8l4-4z'

const LauncherIcon = () => (
  <svg width="9" height="9" viewBox="0 0 9 9" fill="none" stroke="#9aa0a8"><path d="M.5 7V.500H7M3 3l5 5M8.500 4v4.500H4" /></svg>
)

const GroupTitle = ({ children, launch }) => (
  <GroupName>
    {children}
    {launch && <Launcher aria-label={`${children} options`}><LauncherIcon /></Launcher>}
  </GroupName>
)

const SaveIcon = () => (
  <svg width="15" height="15" viewBox="0 0 15 15">
    <path d="M.5.500h13l1 1v13H.5z" fill="#4560b5" stroke="#27357e" />
    <path d="M3 1h9v6H3z" fill="#e4ecfb" />
    <path d="M4 9h7v5H4z" fill="#2b3560" />
    <path d="M5 10h2v4H5z" fill="#fff" />
  </svg>
)

const ExcelIcon = () => (
  <svg width="11" height="17" viewBox="0 0 11 17">
    <path d="M0 1h10v14H0z" fill="#e9f6e4" stroke="#1f7a2e" strokeWidth="2" />
    <path d="M1 4l6 9M7 4l-6 9" stroke="#1f8a35" strokeWidth="3" />
  </svg>
)

const UndoIcon = ({ flip }) => (
  <svg width="13" height="14" viewBox="0 0 13 14">
    <g transform={flip ? 'translate(13 0) scale(-1 1)' : undefined} fill="none" stroke="#9c9899" strokeWidth="2">
      <path d="M2 6q8-7 10 1 0 4-5 6" />
      <path d="M1 1v6h6" />
    </g>
  </svg>
)

const QuickTools = () => (
  <QuickAccess>
    <ExcelIcon />
    <Rule $h={14} $tight />
    <IconButton aria-label="Save"><SaveIcon /></IconButton>
    <IconButton aria-label="Undo" $w={14}><UndoIcon /></IconButton>
    <Caret $c="#9c9899" $m="0" />
    <IconButton aria-label="Redo" $w={14}><UndoIcon flip /></IconButton>
    <Caret $c="#9c9899" $m="0" />
    <Rule $h={14} $tight />
    <svg width="8" height="8"><path d="M1 1h6M1.500 4h5L4 7z" fill="#000" stroke="#000" /></svg>
  </QuickAccess>
)

const RibbonPanel = () => (
  <Ribbon>
    <Group $w={145}>
      <GroupBody $pad="4px 0 0">
        <BigTool $w={38}><PasteIcon />Paste<Caret $m="5px 0" /></BigTool>
        <CommandList $w={105}>
          <ToolRow><SmallTool><CutIcon />Cut</SmallTool></ToolRow>
          <ToolRow><SmallTool><CopyIcon />Copy<Caret $m="0 2px" /></SmallTool></ToolRow>
          <ToolRow><SmallTool><PainterIcon />Format Painter</SmallTool></ToolRow>
        </CommandList>
      </GroupBody>
      <GroupTitle launch>Clipboard</GroupTitle>
    </Group>

    <Group $w={209}>
      <GroupBody>
        <Stack>
          <ToolRow $top={6}>
            <Combo $w={113}>
              <select aria-label="Font" defaultValue="Calibri"><option>Calibri</option></select>
              <Caret />
            </Combo>
            <Combo $w={43} $joined>
              <select aria-label="Font size" defaultValue="11"><option>11</option></select>
              <Caret />
            </Combo>
            <IconButton aria-label="Grow font" $w={26}><GrowIcon /></IconButton>
            <IconButton aria-label="Shrink font" $w={20}><GrowIcon down /></IconButton>
          </ToolRow>
          <ToolRow $top={6}>
            <Glyph $weight={700}>B</Glyph>
            <Glyph $style="italic">I</Glyph>
            <Glyph $deco="underline">U</Glyph>
            <Caret $c="#aaa" $m="0 4px 0 3px" />
            <Rule />
            <IconButton aria-label="Borders" $w={20}><BordersIcon /></IconButton>
            <Caret $c="#aaa" />
            <Rule />
            <IconButton aria-label="Fill colour" $w={20}><BucketIcon /></IconButton>
            <Caret $c="#aaa" />
            <Glyph $w={20} $size={17}>A</Glyph>
            <Caret $c="#aaa" $m="0" />
          </ToolRow>
        </Stack>
      </GroupBody>
      <GroupTitle launch>Font</GroupTitle>
    </Group>

    <Group $w={259}>
      <GroupBody>
        <Stack>
          <ToolRow $top={6}>
            <IconButton $w={23} aria-label="Top align"><Lines rows={[[1], [4], [7, 3, 13]]} /></IconButton>
            <IconButton $w={23} aria-label="Middle align"><Lines rows={[[5], [8], [11, 3, 13]]} /></IconButton>
            <IconButton $w={23} aria-label="Bottom align"><Lines rows={[[8], [11], [14, 3, 13]]} /></IconButton>
            <Rule $h={22} />
            <IconButton $w={22} aria-label="Orientation"><OrientIcon /></IconButton>
            <Caret $c="#aaa" $m="0 12px 0 0" />
            <Rule $h={22} />
            <SmallTool $off><WrapIcon />Wrap Text</SmallTool>
          </ToolRow>
          <ToolRow $top={6}>
            <IconButton $w={23} aria-label="Align left"><Lines rows={[[1], [4, 1, 11], [7], [10, 1, 11], [13]]} /></IconButton>
            <IconButton $w={23} aria-label="Centre"><Lines rows={[[1], [4, 3, 13], [7], [10, 3, 13], [13]]} /></IconButton>
            <IconButton $w={23} aria-label="Align right"><Lines rows={[[1], [4, 5], [7], [10, 5], [13]]} /></IconButton>
            <Rule $h={22} />
            <IconButton $w={20} aria-label="Decrease indent"><IndentIcon /></IconButton>
            <IconButton $w={24} aria-label="Increase indent"><IndentIcon right /></IconButton>
            <Rule $h={22} />
            <SmallTool $off><MergeIcon />Merge &amp; Center<Caret $c="#aaa" $m="0" /></SmallTool>
          </ToolRow>
        </Stack>
      </GroupBody>
      <GroupTitle launch>Alignment</GroupTitle>
    </Group>

    <Group $w={143}>
      <GroupBody>
        <Stack>
          <ToolRow $top={6}>
            <Combo $w={134} $off>
              <select aria-label="Number format" defaultValue=""><option value=""> </option></select>
              <Caret />
            </Combo>
          </ToolRow>
          <ToolRow $top={6}>
            <Glyph $weight={700}>$</Glyph>
            <Caret />
            <Glyph $w={22}>%</Glyph>
            <Glyph $w={24} $weight={700} $size={17}>,</Glyph>
            <Rule />
            <IconButton $w={22} aria-label="Increase decimal"><DecimalIcon /></IconButton>
            <IconButton $w={22} aria-label="Decrease decimal"><DecimalIcon less /></IconButton>
          </ToolRow>
        </Stack>
      </GroupBody>
      <GroupTitle launch>Number</GroupTitle>
    </Group>

    <Group $w={366}>
      <GroupBody $pad="5px 0 0 4px">
        <BigTool $w={68} $off><TableIcon />Conditional<span>Formatting<Caret $c="#aaa" $m="0 0 0 3px" /></span></BigTool>
        <BigTool $w={58} $off><TableIcon brush />Format<span>as Table<Caret $c="#aaa" $m="0 0 0 3px" /></span></BigTool>
        <Gallery>
          <GalleryScroll>
            <Tri d={up} c="#aaa" />
            <Tri d={downward} c="#aaa" />
            <Tri d="M1 1h8v1H1zM1 4h8L5 9z" c="#aaa" />
          </GalleryScroll>
        </Gallery>
      </GroupBody>
      <GroupTitle>Styles</GroupTitle>
    </Group>

    <Group $w={135}>
      <GroupBody $pad="5px 0 0 4px">
        <BigTool $w={42}><InsertIcon />Insert<Caret $m="5px 0" /></BigTool>
        <BigTool $w={42}><InsertIcon remove />Delete<Caret $m="5px 0" /></BigTool>
        <BigTool $w={42}><FormatIcon />Format<Caret $m="5px 0" /></BigTool>
      </GroupBody>
      <GroupTitle>Cells</GroupTitle>
    </Group>

    <Group $w={177}>
      <GroupBody $pad="4px 0 0 6px">
        <CommandList $w={81}>
          <ToolRow>
            <SmallTool $off>
              <svg width="14" height="14"><path d="M11 4V2H2l4 5-4 5h9v-2" fill="none" stroke="#666" strokeWidth="1.500" /></svg>
              AutoSum<Caret $m="0" />
            </SmallTool>
          </ToolRow>
          <ToolRow><SmallTool><FillIcon />Fill<Caret $m="0" /></SmallTool></ToolRow>
          <ToolRow><SmallTool><EraserIcon />Clear<Caret $m="0" /></SmallTool></ToolRow>
        </CommandList>
        <BigTool $w={42} $off><SortIcon />Sort &amp;<span>Filter<Caret $c="#aaa" $m="0 0 0 3px" /></span></BigTool>
        <BigTool $w={42}><BinocularsIcon />Find &amp;<span>Select<Caret $m="0 0 0 3px" /></span></BigTool>
      </GroupBody>
      <GroupTitle>Editing</GroupTitle>
    </Group>
  </Ribbon>
)

const red = 'linear-gradient(#f11, #ff4040)'
const dark = 'linear-gradient(#b80000, #d43030)'
const azure = 'linear-gradient(#0070c0, #3a92d4)'
const jade = 'linear-gradient(#00a84c, #3cc07a)'

const sheetTabs = [
  ['', 8, '#f0f', '#000'],
  ['Trading Plan', 93, 'linear-gradient(#8fcf4c, #a5d96f)', '#000'],
  ['Overview', 72, 'linear-gradient(#fff 40%, #bbb)', '#000'],
  ['Journal', 60, '#ff0', '#000'],
  ['Monte Carlo', 90, red, '#fff'],
  ['Pivot Table', 84, dark, '#fff'],
  ['Target Analysis', 109, azure, '#fff'],
  ['Stop Efficiency', 107, azure, '#fff'],
  ['Position Size Calculator', 158, azure, '#fff'],
  ['Method List', 90, jade, '#000'],
  ['Instrument List', 112, jade, '#000'],
]

const Annotations = () => (
  <Overlay>
    <svg width="100%" height="100%" fill="none" stroke="#c00000">
      <defs>
        <filter id="drop" x="-20%" y="-20%" width="150%" height="150%">
          <feDropShadow dx="5" dy="5" stdDeviation="2" floodColor="#000" floodOpacity="0.45" />
        </filter>
      </defs>
      <g filter="url(#drop)">
        <rect x="202" y="337" width="332" height="266" strokeWidth="2" />
        <ellipse cx="1430" cy="386" rx="88" ry="242" strokeWidth="4" />
        <ellipse cx="1245" cy="364" rx="26" ry="40" strokeWidth="4" />
        <path d="M1179 593L1231 405" strokeWidth="3" />
        <path d="M1234 395L1237 412L1225 409z" fill="#c00000" />
        <path d="M324 676L335 616" strokeWidth="2" />
        <path d="M337 605L342 619L329 616z" fill="#c00000" />
      </g>
    </svg>
    <Remark $x={194} $y={674}>{"haven't figured out\nwhere input fields\nare for this area"}</Remark>
    <Remark $x={1040} $y={619}>{'Only 6 exit 2 trades\n5 winners and 1 b/e'}</Remark>
    <Remark $x={1279} $y={109}>No exit 3 trades</Remark>
  </Overlay>
)

const App = () => (
  <Window>
    <GlobalStyle />
    <Chrome>
      <TitleBar>
        <QuickTools />
        <Title>
          Jo
          <Clock><ClockLabel>CLOCK</ClockLabel>11:32:26</Clock>
          {'8 _RR  -  Microsoft Excel'}
        </Title>
        <WindowButtons>
          <WindowButton aria-label="Minimize" $first><svg width="12" height="8"><path d="M1 3h10v3H1z" fill="#fff" /></svg></WindowButton>
          <WindowButton aria-label="Restore"><svg width="12" height="12" fill="none" stroke="#ddd"><path d="M3.500 3V.500h8v8H9" /><path d="M1.500 3.500h7v7h-7z" strokeWidth="2" /></svg></WindowButton>
          <WindowButton aria-label="Close" $grow={2}><svg width="10" height="10"><path d="M1 1l8 8M9 1L1 9" stroke="#fff" strokeWidth="2" /></svg></WindowButton>
        </WindowButtons>
      </TitleBar>
      <TabStrip>
        <FileTab>File</FileTab>
        <RibbonTab $active>Home</RibbonTab>
        {['Insert', 'Page Layout', 'Formulas', 'Data', 'Review', 'View'].map(name => (
          <RibbonTab key={name}>{name}</RibbonTab>
        ))}
        <MdiButtons>
          <IconButton aria-label="Collapse ribbon"><svg width="10" height="9" fill="#fff" stroke="#555"><path d="M1 5l4-4 4 4v2L7 7.500 5 6 3 7.500 1 7z" /></svg></IconButton>
          <IconButton aria-label="Help">
            <svg width="16" height="16"><circle cx="8" cy="8" r="8" fill="#3d70c4" /><text x="5" y="13" fontFamily="Open Sans" fontWeight="700" fontSize="13" fill="#fff">?</text></svg>
          </IconButton>
          <IconButton aria-label="Minimize workbook"><svg width="12" height="6" fill="#fff" stroke="#555"><path d="M1 1.500h10v3H1z" /></svg></IconButton>
          <IconButton aria-label="Restore workbook"><svg width="12" height="12" fill="#fff" stroke="#555"><path d="M4.500.500h7v7h-7z" /><path d="M.5 4.500h7v7h-7z" /><path d="M3 7h2v2H3z" /></svg></IconButton>
          <IconButton aria-label="Close workbook"><svg width="12" height="11" fill="#fff" stroke="#555"><path d="M1 1h3l2 2 2-2h3L8 5.500 11 10H8L6 8l-2 2H1l3-4.500z" /></svg></IconButton>
        </MdiButtons>
      </TabStrip>
    </Chrome>

    <RibbonPanel />

    <FormulaBar>
      <NameBox>
        <input aria-label="Name box" defaultValue="K24" />
        <Caret $m="0 0 0 10px" $c="#222" />
      </NameBox>
      <FxArea><Knob /><FxButton aria-label="Insert function">fx</FxButton></FxArea>
      <FormulaInput aria-label="Formula" />
      <Expand aria-label="Expand formula bar"><svg width="8" height="7"><path d="M1 1l3 4 3-4" fill="none" stroke="#444" strokeWidth="2" /></svg></Expand>
    </FormulaBar>

    <Workspace>
      <SheetArea>
        <Sheet />
        <Floating $x={1518} $y={26}><ForumLogo /></Floating>
        <Floating $x={539} $y={292}><ImportButton>Import Old Journal</ImportButton></Floating>
        <Floating $x={27} $y={477}><EquityChart /></Floating>
        <Floating $x={888} $y={477}>
          <BarChart x={888} width={421} title="Hourly Profit / Trade" titleX={1096} left={919} right={1293} max={60} step={10} bars={ratioBars} />
        </Floating>
        <Floating $x={1308} $y={477}>
          <BarChart x={1308} width={523} title="Hourly Profit" titleX={1567} left={1345} right={1731} max={500} step={50} bars={profitBars}>
            <path d="M1752 807h6v6h-6z" fill={sky} />
            <ChartText x="1761" y="813">Gross Profit</ChartText>
            <path d="M1752 828h6v7h-6z" fill="#d99694" />
            <ChartText x="1761" y="835">Gross Loss</ChartText>
            <path d="M1752 850h6v7h-6z" fill={leaf} />
            <path d="M1758 850h7v7h-7z" fill="#f00" />
            <ChartText x="1769" y="856">Net Profit</ChartText>
          </BarChart>
        </Floating>
      </SheetArea>
      <VScroll>
        <Splitter $w={14} $h={8} />
        <Arrow aria-label="Scroll up" $h={18}><Tri d={up} /></Arrow>
        <Thumb $vertical><i /><i /><i /><i /></Thumb>
        <Arrow aria-label="Scroll down" style={{ marginTop: 'auto' }}><Tri d={downward} /></Arrow>
      </VScroll>
    </Workspace>

    <SheetBar>
      <SheetNav>
        <button aria-label="First sheet"><Tri d="M0 1h1v8H0zM6 1v8L2 5z" /></button>
        <button aria-label="Previous sheet"><Tri d={leftward} /></button>
        <button aria-label="Next sheet"><Tri d={rightward} /></button>
        <button aria-label="Last sheet"><Tri d="M8 1h1v8H8zM3 1v8l4-4z" /></button>
      </SheetNav>
      {sheetTabs.map(([name, width, bg, fg]) => (
        <TabEdge key={name} $w={width} $first={!name}>
          <SheetTab $bg={bg} $fg={fg} $first={!name} $active={name === 'Overview'} aria-label={name || 'Sheet'}>{name}</SheetTab>
        </TabEdge>
      ))}
      <TabEdge $w={35}>
        <SheetTab $bg="#e3e6eb" aria-label="Insert worksheet">
          <svg width="14" height="13"><path d="M4 3.500h9v6l-3 3H4z" fill="#dbe6f8" stroke="#5c78ad" /><path d="M4 0l1 2 2 1-2 1-1 2-1-2-2-1 2-1z" fill="#f0a030" /></svg>
        </SheetTab>
      </TabEdge>
      <HScroll>
        <Splitter $w={8} $h={15} />
        <Arrow aria-label="Scroll left"><Tri d={leftward} /></Arrow>
        <Thumb><i /><i /><i /><i /></Thumb>
        <Arrow aria-label="Scroll right" style={{ marginLeft: 'auto' }}><Tri d={rightward} /></Arrow>
        <Splitter $w={8} $h={15} style={{ marginRight: 17 }} />
      </HScroll>
    </SheetBar>

    <StatusBar>
      <Ready>Ready</Ready>
      <ViewTools>
        <ViewButton $on aria-label="Normal"><svg width="13" height="11" fill="#fff" stroke="#666"><path d="M.5.500h12v10H.5zM.5 4h12M.5 7h12M4.500.500v10M8.500.500v10" /></svg></ViewButton>
        <ViewButton aria-label="Page layout"><svg width="13" height="12" fill="#b9bdc2" stroke="#666"><path d="M.5.500h12v11H.5z" /><path d="M3.500 2.500h6v7h-6zM5 4.500h3M5 6.500h3" fill="#fff" /></svg></ViewButton>
        <ViewButton aria-label="Page break preview"><svg width="14" height="12" fill="#a9adb2" stroke="#666"><path d="M.5.500h13v11H.5z" /><path d="M.5.500h4v6h-4zM4.500.500h4v6h-4z" fill="#fff" /></svg></ViewButton>
        <ZoomLevel>90%</ZoomLevel>
        <IconButton aria-label="Zoom out" $w={17}><svg width="16" height="16"><circle cx="8" cy="8" r="7" fill="#f4f5f6" stroke="#777" /><path d="M4 8h8" stroke="#444" strokeWidth="2" /></svg></IconButton>
        <ZoomSlider type="range" aria-label="Zoom" min="10" max="180" defaultValue="90" />
        <IconButton aria-label="Zoom in" $w={17}><svg width="16" height="16"><circle cx="8" cy="8" r="7" fill="#f4f5f6" stroke="#777" /><path d="M4 8h8M8 4v8" stroke="#444" strokeWidth="2" /></svg></IconButton>
      </ViewTools>
    </StatusBar>

    <Annotations />
  </Window>
)

export default App
